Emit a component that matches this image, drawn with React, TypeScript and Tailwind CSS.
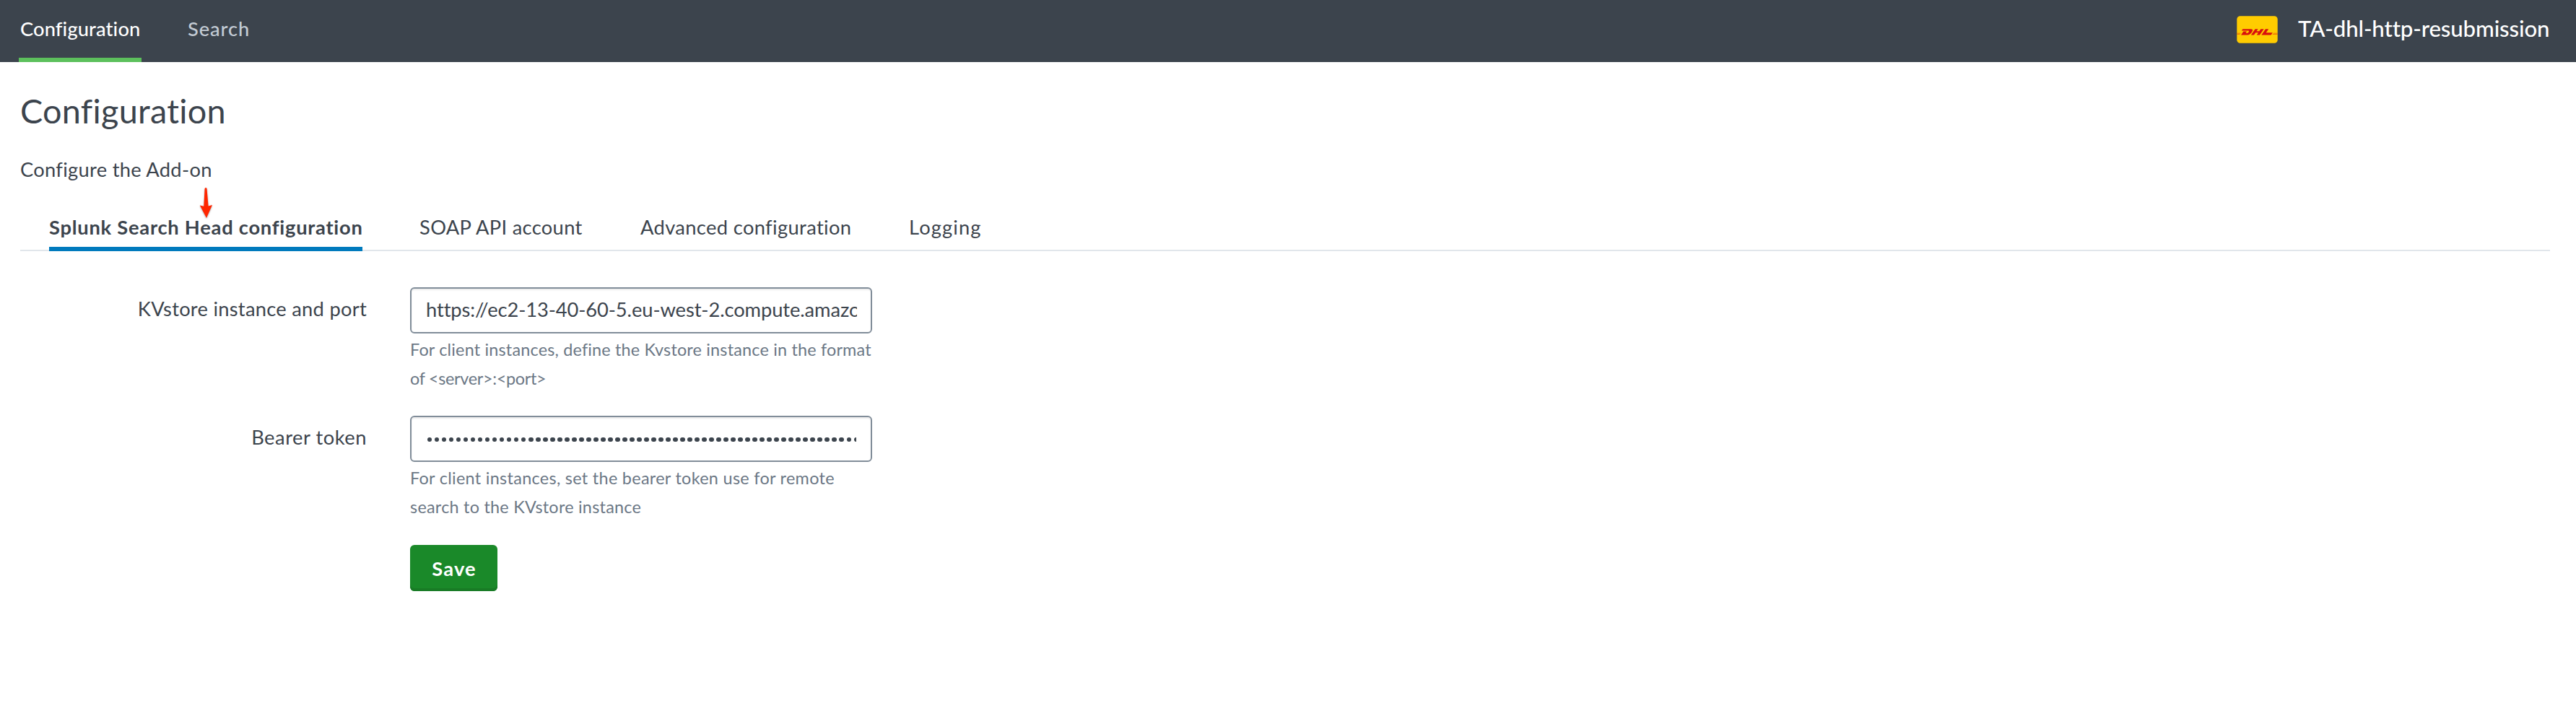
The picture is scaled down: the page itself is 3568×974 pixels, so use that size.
import React from "react";

function DhlLogo() {
  return (
    <svg width="57" height="38" viewBox="0 0 57 38" aria-label="DHL">
      <rect x="0.3" y="0.3" width="56.4" height="37.4" rx="4.5" fill="#ffcc00" />
      <g fill="#d9100d">
        <path d="M8.4 18.2H19.5C22.2 18.2 22.7 19.500 21.700 21.200C20 24.300 17.800 26.500 14.500 26.500H6L9.400 21.500H14L12.500 23.800H14.200C15.300 23.800 16.100 23.200 16.700 22.200C17.300 21.200 17 20.600 15.900 20.600H6.800Z" />
        <path d="M25.600 18.200H29.600L27.500 21.200H31.300L33.400 18.200H37.600L31.900 26.500H27.700L30 23.200H26.200L23.900 26.500H19.900Z" />
        <path d="M40 18.200H44.200L40.700 23.300H49.800L47.600 26.500H34.300Z" />
        <path d="M.3 23.800H5.800L5.300 24.600H.3ZM.3 25.300H4.800L4.300 26.100H.3ZM51 23.800H56.700V24.600H50.500ZM50 25.300H56.700V26.100H49.500Z" opacity=".6" />
      </g>
    </svg>
  );
}

function Pointer() {
  return (
    <svg
      className="absolute left-[274px] top-[257px] drop-shadow-[0_1px_1px_rgba(0,0,0,0.35)]"
      width="24"
      height="48"
      viewBox="0 0 24 48"
      aria-hidden="true"
    >
      <path
        d="M9.600 4.500Q9.800 3 11 3Q12.300 3 12.500 4.500L14.600 28.500L20 27L12 45L2.800 27.500L8.300 28.800Z"
        fill="#ff2600"
      />
    </svg>
  );
}

const dots = Array.from({ length: 60 }, (_, i) => i);

const field =
  "mb-[2px] h-16 w-[640px] rounded-[6px] border-2 border-[#818d99] bg-white px-5 shadow-[inset_0_2px_2px_rgba(0,0,0,0.08)]";
const help = "text-[23.4px] leading-10 whitespace-nowrap text-[#6b7785]";

export default function App() {
  return (
    <div className="relative min-h-[974px] w-full bg-white font-[Lato,sans-serif] text-[27.3px] text-[#3c444d]">
      <header className="flex h-[86px] justify-between bg-[#3c444d] pr-[34px] pl-[26px] font-medium text-white">
        <nav className="flex">
          <a className="h-[86px] w-[170px] border-b-[6px] border-[#5cc05c] pl-[2px] leading-[80px] tracking-[0.12px]">
            Configuration
          </a>
          <a className="ml-[64px] leading-[80px] tracking-[0.9px] text-[#c3cbd4]">Search</a>
        </nav>
        <div className="flex items-start">
          <div className="mr-[28px] pt-[22px]">
            <DhlLogo />
          </div>
          <span className="w-[351px] text-[31.2px] leading-[79px] tracking-[-0.12px] whitespace-nowrap">
            TA-dhl-http-resubmission
          </span>
        </div>
      </header>

      <main className="pr-9 pl-7">
        <h1 className="pt-[37px] text-[46.8px] leading-[60px] tracking-[0.27px]">Configuration</h1>
        <p className="pt-[32px] leading-[40px] tracking-[0.29px]">Configure the Add-on</p>

        <div className="mt-[39px] flex h-[54px] items-end border-b-2 border-[#e1e6eb] pl-10 leading-[42px] whitespace-nowrap">
          <div className="-mb-[2px] h-[54px] w-[434px] border-b-[6px] border-[#007abd] font-bold tracking-[0.75px]">
            Splunk Search Head configuration
          </div>
          <div className="ml-[79px] h-[52px] w-[226px] tracking-[0.32px]">SOAP API account</div>
          <div className="ml-[80px] h-[52px] w-[292px] tracking-[0.36px]">Advanced configuration</div>
          <div className="ml-[80px] h-[52px] tracking-[1.13px]">Logging</div>
        </div>

        <div className="mt-[50px] flex">
          <label className="w-[480px] pt-[9px] text-right leading-[41px] tracking-[0.27px]">
            KVstore instance and port
          </label>
          <div className="ml-[60px]">
            <div className={field}>
              <div className="w-[597px] overflow-hidden leading-[58px] tracking-[-0.09px] whitespace-nowrap">
                https://ec2-13-40-60-5.eu-west-2.compute.amazonaws.com:8089
              </div>
            </div>
            <p className={help}>
              <span className="block tracking-[0.19px]">
                For client instances, define the Kvstore instance in the format
              </span>
              <span className="block tracking-[-0.3px]">of &lt;server&gt;:&lt;port&gt;</span>
            </p>
          </div>
        </div>

        <div className="mt-[32px] flex">
          <label className="w-[480px] pt-[9px] text-right leading-[41px] tracking-[0.53px]">
            Bearer token
          </label>
          <div className="ml-[60px]">
            <div className={field}>
              <div className="flex h-full w-[596px] items-center gap-[3.33px] overflow-hidden pt-[2px] pl-[1.600px]">
                {dots.map((i) => (
                  <span key={i} className="size-[6.7px] shrink-0 rounded-full bg-[#3c444d]" />
                ))}
              </div>
            </div>
            <p className={help}>
              <span className="block tracking-[0.31px]">
                For client instances, set the bearer token use for remote
              </span>
              <span className="block tracking-[0.25px]">search to the KVstore instance</span>
            </p>
            <button className="mt-[33px] block h-16 w-[121px] rounded-[6px] bg-[#1a8929] pl-px text-center leading-[61px] font-bold tracking-[1.1px] text-white shadow-[inset_0_-4px_0_#187b25]">
              Save
            </button>
          </div>
        </div>
      </main>
      <Pointer />
    </div>
  );
}
